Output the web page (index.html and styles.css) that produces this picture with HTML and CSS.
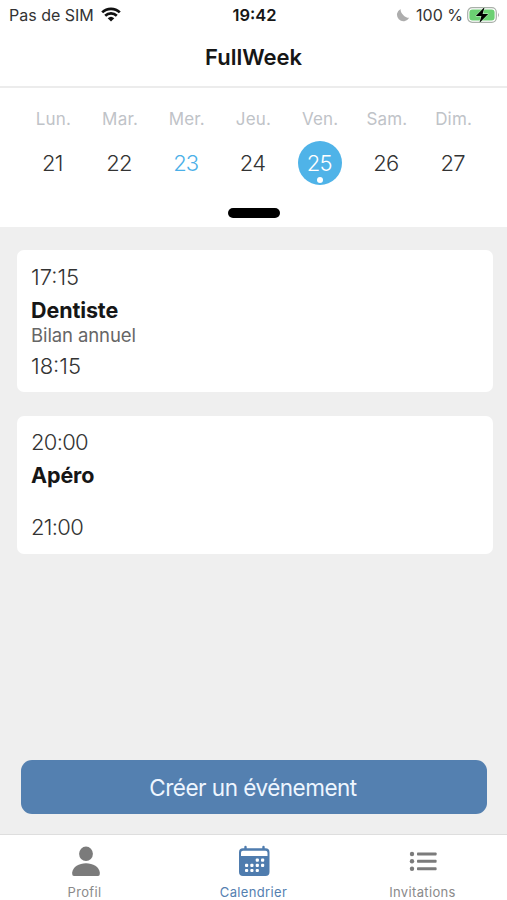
FILE: index.html
```html
<!DOCTYPE html>
<html lang="fr">
<head>
  <meta charset="UTF-8">
  <meta name="viewport" content="width=device-width, initial-scale=1.0">
  <title>FullWeek</title>
  <link rel="stylesheet" href="styles.css">
</head>
<body>
  <div class="app">
    <div class="status-bar">
      <div class="status-left">
        <span class="carrier">Pas de SIM</span>
        <svg class="wifi" width="20" height="15" viewBox="0 0 20 15">
          <path d="M1.2 5.4a12.6 12.6 0 0 1 17.6 0M4.2 8.7a8.4 8.4 0 0 1 11.6 0" fill="none" stroke="#111" stroke-width="2.7"/>
          <path d="M6.7 11.3a4.9 4.9 0 0 1 6.6 0L10 14.6z" fill="#111"/>
        </svg>
      </div>
      <div class="clock">19:42</div>
      <div class="status-right">
        <svg class="moon" width="14" height="14" viewBox="0 0 14 14">
          <path d="M4.6 0.9A6.5 6.5 0 1 0 13.2 9.8C9.2 10.2 4.1 4.9 4.6 0.9z" fill="#adadad"/>
        </svg>
        <span class="percent">100 %</span>
        <svg class="battery" width="33" height="18" viewBox="0 0 33 18">
          <rect x="0.7" y="1.7" width="28.6" height="14.6" rx="4.5" fill="#fff" stroke="#a9b0a9" stroke-width="1.2"/>
          <rect x="2.4" y="3.4" width="25.2" height="11.2" rx="3" fill="#6bd072"/>
          <path d="M31 6.6q1.8 2.4 0 4.8z" fill="#a5a5a5"/>
          <path d="M17.6 1L8.8 10h5.6l-2 7L21.2 8h-5.6z" fill="#000" stroke="#d5f5d6" stroke-width="1" paint-order="stroke"/>
        </svg>
      </div>
    </div>

    <div class="header">FullWeek</div>

    <div class="week">
      <div class="days">
        <div class="day"><span class="name">Lun.</span><span class="number">21</span></div>
        <div class="day"><span class="name">Mar.</span><span class="number">22</span></div>
        <div class="day"><span class="name">Mer.</span><span class="number today">23</span></div>
        <div class="day"><span class="name">Jeu.</span><span class="number">24</span></div>
        <div class="day"><span class="name">Ven.</span><span class="number selected">25</span></div>
        <div class="day"><span class="name">Sam.</span><span class="number">26</span></div>
        <div class="day"><span class="name">Dim.</span><span class="number">27</span></div>
      </div>
      <div class="knob"></div>
    </div>

    <div class="agenda">
      <div class="event">
        <div class="time">17:15</div>
        <div class="title">Dentiste</div>
        <div class="note">Bilan annuel</div>
        <div class="time">18:15</div>
      </div>
      <div class="event event-short">
        <div class="time">20:00</div>
        <div class="title">Apéro</div>
        <div class="note"></div>
        <div class="time">21:00</div>
      </div>
      <button class="button">Créer un événement</button>
    </div>

    <div class="tabs">
      <div class="tab">
        <svg width="32" height="32" viewBox="0 0 32 32">
          <ellipse cx="17" cy="8.8" rx="6.9" ry="7.3"/>
          <path d="M3.2 29V27.5C3.8 21.8 10 18.2 17 18.2S30.2 21.8 30.8 27.5V29Q30.8 31 29 31H5Q3.2 31 3.2 29z"/>
        </svg>
        <span>Profil</span>
      </div>
      <div class="tab active">
        <svg width="32" height="32" viewBox="0 0 32 32">
          <path d="M5 3.3h1.3V2a1.2 1.2 0 0 1 2.4 0v1.3h15.6V2a1.2 1.2 0 0 1 2.4 0v1.3H27.5a4 4 0 0 1 4 4V27a4 4 0 0 1-4 4H5a4 4 0 0 1-4-4V7.3a4 4 0 0 1 4-4z"/>
          <path d="M5 5.8h22.5a2 2 0 0 1 2 2V11H3V7.800a2 2 0 0 1 2-2z" fill="#fff"/>
          <g fill="#fff">
            <rect x="17.7" y="13.5" width="3.2" height="3.2" rx="1"/>
            <rect x="23" y="13.5" width="3.2" height="3.2" rx="1"/>
            <rect x="7" y="18.7" width="3.2" height="3.2" rx="1"/>
            <rect x="12.3" y="18.7" width="3.2" height="3.2" rx="1"/>
            <rect x="17.7" y="18.7" width="3.2" height="3.2" rx="1"/>
            <rect x="23" y="18.7" width="3.2" height="3.2" rx="1"/>
            <rect x="7" y="23.9" width="3.2" height="3.2" rx="1"/>
            <rect x="12.3" y="23.9" width="3.2" height="3.2" rx="1"/>
            <rect x="17.7" y="23.9" width="3.2" height="3.2" rx="1"/>
          </g>
        </svg>
        <span>Calendrier</span>
      </div>
      <div class="tab">
        <svg width="32" height="32" viewBox="0 0 32 32">
          <circle cx="5" cy="9" r="2.2"/>
          <circle cx="5" cy="16.3" r="2.2"/>
          <circle cx="5" cy="23.7" r="2.2"/>
          <rect x="10" y="7.5" width="19.6" height="3" rx="0.8"/>
          <rect x="10" y="14.8" width="19.6" height="3" rx="0.8"/>
          <rect x="10" y="22.2" width="19.6" height="3" rx="0.8"/>
        </svg>
        <span>Invitations</span>
      </div>
    </div>
  </div>
</body>
</html>
```

FILE: styles.css
```css
* {
  box-sizing: border-box;
}
body {
  font-family: Inter, 'Liberation Sans', sans-serif;
  background-color: #ffffff;
  color: #161616;
  margin: 0;
}
.app {
  display: flex;
  flex-direction: column;
  height: 900px;
  overflow: hidden;
}
.status-bar {
  display: grid;
  grid-template-columns: 1fr auto 1fr;
  align-items: center;
  height: 29px;
  padding: 0 7px 0 9px;
  font-size: 16px;
}
.status-left,
.status-right {
  display: flex;
  align-items: center;
}
.status-right {
  justify-content: flex-end;
}
.carrier {
  color: #333333;
}
.wifi {
  margin-left: 7px;
}
.clock {
  font-size: 16.5px;
  font-weight: 600;
}
.percent {
  margin: 0 4px 0 6px;
  color: #333333;
}
.header {
  height: 59px;
  border-bottom: 2px solid #ececec;
  line-height: 57px;
  font-size: 22px;
  font-weight: 600;
  text-align: center;
}
.week {
  height: 139px;
  padding: 18px 20px 0;
}
.days {
  display: grid;
  grid-template-columns: repeat(7, 1fr);
}
.day {
  display: flex;
  flex-direction: column;
  align-items: center;
}
.name {
  height: 24px;
  line-height: 26px;
  font-size: 17px;
  letter-spacing: 0.2px;
  color: #bfc3c8;
}
.number {
  position: relative;
  width: 44px;
  height: 44px;
  margin-top: 11px;
  padding-right: 2px;
  line-height: 44px;
  border-radius: 50%;
  font-size: 22px;
  font-weight: 300;
  letter-spacing: -0.8px;
  text-align: center;
  color: #333333;
}
.today {
  color: #4bb0e8;
}
.selected {
  background-color: #4fb3e8;
  color: #ffffff;
}
/* event marker under the selected date */
.selected::after {
  content: '';
  position: absolute;
  left: 19px;
  bottom: 2px;
  width: 6px;
  height: 6px;
  border-radius: 50%;
  background-color: #ffffff;
}
.knob {
  width: 52px;
  height: 10px;
  margin: 23px auto 0;
  border-radius: 5px;
  background-color: #000000;
}
.agenda {
  flex: 1;
  display: flex;
  flex-direction: column;
  padding: 23px 14px 20px 17px;
  background-color: #efefef;
}
.event {
  height: 142px;
  margin-bottom: 24px;
  padding: 12px 14px;
  border-radius: 7px;
  background-color: #ffffff;
}
.event-short {
  height: 138px;
  padding-top: 11px;
}
.time {
  height: 30px;
  line-height: 30px;
  font-size: 22px;
  font-weight: 300;
  color: #333333;
}
.event-short .time {
  letter-spacing: -0.7px;
}
.title {
  height: 36px;
  line-height: 36px;
  font-size: 21.5px;
  font-weight: 700;
  letter-spacing: -0.1px;
}
.note {
  height: 23px;
  margin-top: -4px;
  line-height: 23px;
  font-size: 18.5px;
  letter-spacing: -0.1px;
  color: #666666;
}
.note + .time {
  margin-top: 4px;
}
.note:empty {
  height: 19px;
}
.button {
  height: 54px;
  margin: auto 6px 0 4px;
  padding: 0 8px 0 6px;
  border: none;
  border-radius: 11px;
  background-color: #5480b0;
  color: #eef6ff;
  font-family: inherit;
  font-size: 22.5px;
  letter-spacing: -0.5px;
}
.tabs {
  display: grid;
  grid-template-columns: repeat(3, 1fr);
  height: 66px;
  border-top: 1px solid #dedede;
  background-color: #ffffff;
}
.tab {
  display: flex;
  flex-direction: column;
  align-items: center;
  padding-top: 10px;
  font-size: 13px;
  letter-spacing: 0.35px;
  color: #8a8a8a;
  fill: #7b7b7b;
}
.tab span {
  margin-top: 7px;
  line-height: 16px;
}
.active {
  color: #5480b0;
  fill: #4f7cae;
}
```
